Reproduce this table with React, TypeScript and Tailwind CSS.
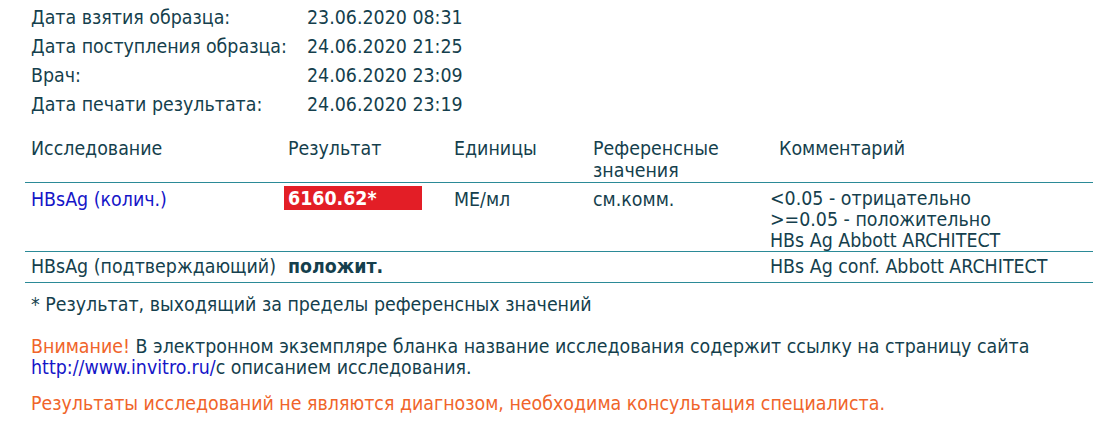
const font = { fontFamily: "'DejaVu Sans Condensed', 'DejaVu Sans', sans-serif" };

const dates = [
  ["Дата взятия образца:", "23.06.2020 08:31"],
  ["Дата поступления образца:", "24.06.2020 21:25"],
  ["Врач:", "24.06.2020 23:09"],
  ["Дата печати результата:", "24.06.2020 23:19"],
];

export default function App() {
  return (
    <div className="bg-white w-[1095px] h-[428px] text-[#153f4d] text-[19.4px] leading-[21px]" style={font}>
      <div className="pl-[31px] pt-[3px]">
        {dates.map(([k, v]) => (
          <div key={k} className="flex h-[29px] items-center">
            <span className="w-[276px]">{k}</span>
            <span>{v}</span>
          </div>
        ))}
      </div>
      <table className="ml-[25px] mt-[19px] w-[1068px] border-collapse">
        <thead>
          <tr className="border-b border-[#2b8a97] align-top">
            <th className="font-normal text-left pl-[6px] w-[259px]">Исследование</th>
            <th className="font-normal text-left pl-[4px] w-[170px]">Результат</th>
            <th className="font-normal text-left w-[139px]">Единицы</th>
            <th className="font-normal text-left w-[177px] leading-[22px]">
              Референсные
              <br />
              значения
            </th>
            <th className="font-normal text-left pl-[9px]">Комментарий</th>
          </tr>
        </thead>
        <tbody>
          <tr className="border-b border-[#2b8a97] align-top">
            <td className="pl-[6px] pt-[6px] text-[#1515c8]">HBsAg (колич.)</td>
            <td className="pt-[3px]">
              <div className="w-[138px] h-[24px] bg-[#e31e26] text-white font-bold pl-[4px] flex items-center">6160.62*</div>
            </td>
            <td className="pt-[6px]">МЕ/мл</td>
            <td className="pt-[6px]">см.комм.</td>
            <td className="pt-[5px]">
              &lt;0.05 - отрицательно
              <br />
              &gt;=0.05 - положительно
              <br />
              HBs Ag Abbott ARCHITECT
            </td>
          </tr>
          <tr className="border-b border-[#2b8a97] align-top">
            <td className="pl-[6px] pt-[4px] pb-[5px] whitespace-nowrap">HBsAg (подтверждающий)</td>
            <td className="pt-[4px] pl-[4px] font-bold">положит.</td>
            <td></td>
            <td></td>
            <td className="pt-[4px]">HBs Ag conf. Abbott ARCHITECT</td>
          </tr>
        </tbody>
      </table>
      <div className="pl-[31px] pt-[11px]">* Результат, выходящий за пределы референсных значений</div>
      <div className="pl-[31px] pt-[21px]">
        <span className="text-[#f0642a]">Внимание!</span> В электронном экземпляре бланка название исследования содержит ссылку на страницу сайта
        <br />
        <span className="text-[#1515c8]">http://www.invitro.ru/</span>с описанием исследования.
      </div>
      <div className="pl-[31px] pt-[15px] text-[#f0642a]">Результаты исследований не являются диагнозом, необходима консультация специалиста.</div>
    </div>
  );
}
